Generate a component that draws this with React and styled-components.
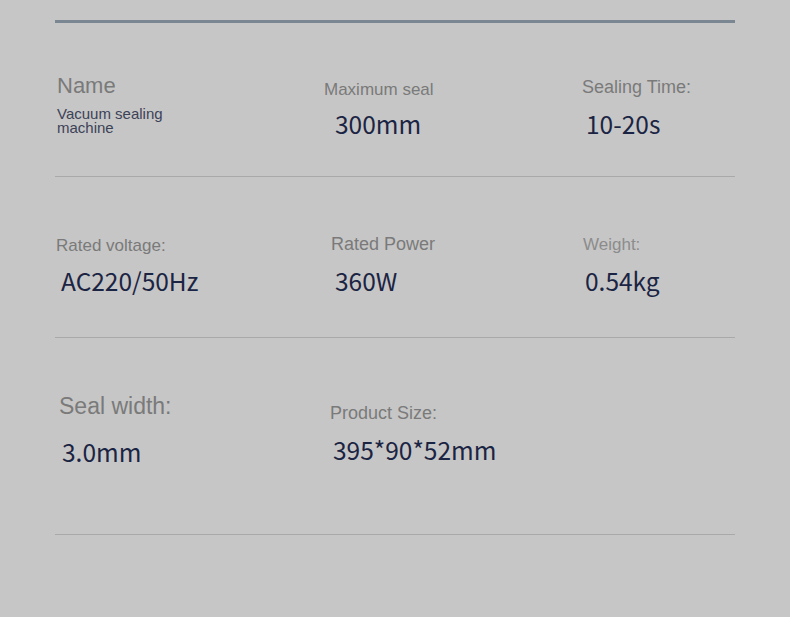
import React from "react";
import styled, { createGlobalStyle } from "styled-components";

const Global = createGlobalStyle`
  html, body { margin: 0; padding: 0; background: #c6c6c6; }
  body { width: 790px; height: 617px; overflow: hidden; }
`;

const Page = styled.div`
  width: 790px;
  height: 617px;
  background: #c6c6c6;
  padding: 20px 55px 0;
  box-sizing: border-box;
`;

const TopRule = styled.div`
  height: 3px;
  background: #7b8693;
`;

const SpecRow = styled.div`
  display: grid;
  grid-template-columns: 269px 258px 1fr;
  height: ${(p) => p.$h}px;
  box-sizing: border-box;
  border-bottom: 1px solid #a9a9a9;
`;

const Cell = styled.div`
  display: flex;
  flex-direction: column;
  align-items: flex-start;
  padding-top: ${(p) => p.$top}px;
  padding-left: ${(p) => p.$left}px;
  gap: ${(p) => p.$gap}px;
`;

const Label = styled.div`
  font-family: "Liberation Sans", Arial, sans-serif;
  font-size: ${(p) => p.$size}px;
  line-height: 1;
  color: ${(p) => (p.$light ? "#8c8c8c" : "#7a7a7a")};
  white-space: nowrap;
`;

const SubText = styled.div`
  font-family: "Liberation Sans", Arial, sans-serif;
  font-size: 15px;
  line-height: 14px;
  color: #3d4257;
  width: 120px;
`;

const Value = styled.div`
  font-family: "Noto Sans CJK SC", "Noto Sans", sans-serif;
  font-size: 24.5px;
  line-height: 1;
  color: #1b2443;
  margin-left: ${(p) => p.$indent || 0}px;
  white-space: nowrap;
`;

export default function App() {
  return (
    <>
      <Global />
      <Page>
        <TopRule />
        <SpecRow $h={154}>
          <Cell $top={52} $left={2} $gap={10}>
            <Label $size={22}>Name</Label>
            <SubText>Vacuum sealing machine</SubText>
          </Cell>
          <Cell $top={58} $left={-1} $gap={14}>
            <Label $size={17}>Maximum seal</Label>
            <Value $indent={11}>300mm</Value>
          </Cell>
          <Cell $top={55} $left={-1} $gap={16}>
            <Label $size={18}>Sealing Time:</Label>
            <Value $indent={4}>10-20s</Value>
          </Cell>
        </SpecRow>
        <SpecRow $h={161}>
          <Cell $top={60} $left={1} $gap={15}>
            <Label $size={17}>Rated voltage:</Label>
            <Value $indent={5}>AC220/50Hz</Value>
          </Cell>
          <Cell $top={58} $left={7} $gap={16}>
            <Label $size={18}>Rated Power</Label>
            <Value $indent={4}>360W</Value>
          </Cell>
          <Cell $top={59} $left={1} $gap={16}>
            <Label $size={17} $light>Weight:</Label>
            <Value $indent={2}>0.54kg</Value>
          </Cell>
        </SpecRow>
        <SpecRow $h={197}>
          <Cell $top={57} $left={4} $gap={22}>
            <Label $size={23}>Seal width:</Label>
            <Value $indent={3}>3.0mm</Value>
          </Cell>
          <Cell $top={66} $left={6} $gap={16}>
            <Label $size={18}>Product Size:</Label>
            <Value $indent={3}>395*90*52mm</Value>
          </Cell>
          <Cell />
        </SpecRow>
      </Page>
    </>
  );
}
